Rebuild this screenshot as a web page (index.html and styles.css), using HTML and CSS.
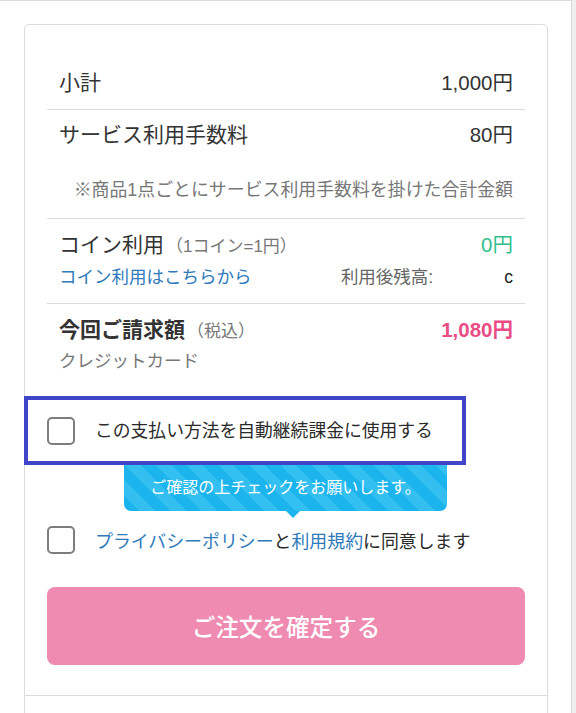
FILE: index.html
```html
<!DOCTYPE html>
<html lang="ja">
<head>
<meta charset="utf-8">
<link rel="stylesheet" href="styles.css">
</head>
<body>
<div class="page">
  <div class="card">
    <div class="section">
      <div class="row">
        <div class="line">
          <span class="label">小計</span>
          <span class="value">1,000円</span>
        </div>
      </div>
      <div class="row row-fee">
        <div class="line">
          <span class="label">サービス利用手数料</span>
          <span class="value">80円</span>
        </div>
        <p class="note">※商品1点ごとにサービス利用手数料を掛けた合計金額</p>
      </div>
      <div class="row">
        <div class="line">
          <span class="label">コイン利用<span class="sub">（1コイン=1円）</span></span>
          <span class="value green">0円</span>
        </div>
        <div class="line line-second">
          <a class="link">コイン利用はこちらから</a>
          <span class="balance-label">利用後残高:</span>
          <span class="balance">c</span>
        </div>
      </div>
      <div class="row row-total">
        <div class="line">
          <span class="label bold">今回ご請求額<span class="sub">（税込）</span></span>
          <span class="value pink bold">1,080円</span>
        </div>
        <div class="line line-second-total">
          <span class="method">クレジットカード</span>
        </div>
      </div>

      <div class="auto-box">
        <span class="checkbox"></span>
        <span class="check-label">この支払い方法を自動継続課金に使用する</span>
      </div>

      <div class="tooltip">
        <div class="tooltip-body">ご確認の上チェックをお願いします。</div>
        <div class="tooltip-arrow"></div>
      </div>

      <div class="agree">
        <span class="checkbox"></span>
        <span class="agree-label"><a class="link">プライバシーポリシー</a>と<a class="link">利用規約</a>に同意します</span>
      </div>

      <button class="confirm" type="button">ご注文を確定する</button>
    </div>
    <div class="section-next"></div>
  </div>
</div>
</body>
</html>
```

FILE: styles.css
```css
* {
  box-sizing: border-box;
}

html, body {
  margin: 0;
  padding: 0;
}

body {
  background: #efefef;
  font-family: "Liberation Sans", "Noto Sans CJK JP", sans-serif;
  color: #333;
}

.page {
  width: 572px;
  min-height: 713px;
  background: #fff;
  border-top: 1px solid #dcdcdc;
  border-right: 1px solid #dcdcdc;
  padding-top: 23px;
  padding-left: 24px;
}

.card {
  width: 524px;
  border: 1px solid #dcdcdc;
  border-radius: 5px;
  background: #fff;
}

.section {
  padding: 32px 22px 30px;
  border-bottom: 1px solid #dcdcdc;
}

.section-next {
  height: 60px;
}

.row {
  padding: 14px 12px;
  border-bottom: 1px solid #dcdcdc;
}

.row-fee {
  padding-top: 13px;
  padding-bottom: 16px;
}

.row-total {
  border-bottom: none;
  padding-bottom: 0;
}

.line {
  display: flex;
  align-items: center;
  justify-content: space-between;
  height: 24px;
  line-height: 24px;
  white-space: nowrap;
}

.label {
  font-size: 21px;
  line-height: 24px;
  color: #333;
}

.value {
  font-size: 20.5px;
  line-height: 24px;
  color: #333;
}

.bold {
  font-weight: 700;
}

.sub {
  font-size: 17px;
  line-height: 1;
  font-weight: 400;
  color: #777;
  margin-left: 2px;
}

.green {
  color: #2fc08c;
}

.pink {
  color: #ea4c85;
}

.note {
  margin: 31px 0 0;
  font-size: 17.9px;
  line-height: 24px;
  color: #777;
  text-align: right;
  white-space: nowrap;
}

.line-second {
  margin-top: 8px;
  justify-content: flex-start;
}

.line-second-total {
  margin-top: 7px;
}

.link {
  color: #2e7abb;
  text-decoration: none;
}

.line-second .link {
  font-size: 17.5px;
}

.balance-label {
  margin-left: auto;
  font-size: 17.5px;
  color: #666;
}

.balance {
  margin-left: 71px;
  font-size: 17.5px;
  color: #222;
}

.method {
  font-size: 17.5px;
  color: #777;
}

.auto-box {
  display: flex;
  align-items: center;
  margin: 23px 0 0 -23px;
  width: 442px;
  border: 4px solid #4044c9;
  padding: 17px 19px 16px;
  background: #fff;
}

.checkbox {
  flex: none;
  width: 28px;
  height: 28px;
  border: 2px solid #7d7d7d;
  border-radius: 5px;
  background: #fff;
}

.check-label {
  margin-left: 20px;
  font-size: 17.8px;
  line-height: 24px;
  color: #2a2a2a;
  white-space: nowrap;
}

.tooltip {
  margin-left: 77px;
  width: 323px;
  display: flex;
  flex-direction: column;
}

.tooltip-body {
  height: 46px;
  border-radius: 0 0 7px 7px;
  background-color: #1cb4ec;
  background-image: repeating-linear-gradient(45deg, #1cb4ec 0, #1cb4ec 11px, #33bff0 11px, #33bff0 22px);
  color: #fff;
  font-size: 16px;
  line-height: 46px;
  text-align: center;
  white-space: nowrap;
}

.tooltip-arrow {
  width: 0;
  height: 0;
  margin-left: 162px;
  border-left: 7px solid transparent;
  border-right: 7px solid transparent;
  border-top: 7px solid #1cb4ec;
}

.agree {
  display: flex;
  align-items: center;
  margin-top: 8px;
}

.agree-label {
  margin-left: 20px;
  font-size: 17.9px;
  line-height: 24px;
  color: #2a2a2a;
  padding-top: 3px;
  white-space: nowrap;
}

.confirm {
  display: block;
  width: 100%;
  height: 78px;
  margin-top: 33px;
  border: none;
  border-radius: 8px;
  background: #ef8ab1;
  color: #fff;
  font-family: "Liberation Sans", "Noto Sans CJK JP", sans-serif;
  font-size: 23.6px;
  font-weight: 500;
  cursor: pointer;
}
```
